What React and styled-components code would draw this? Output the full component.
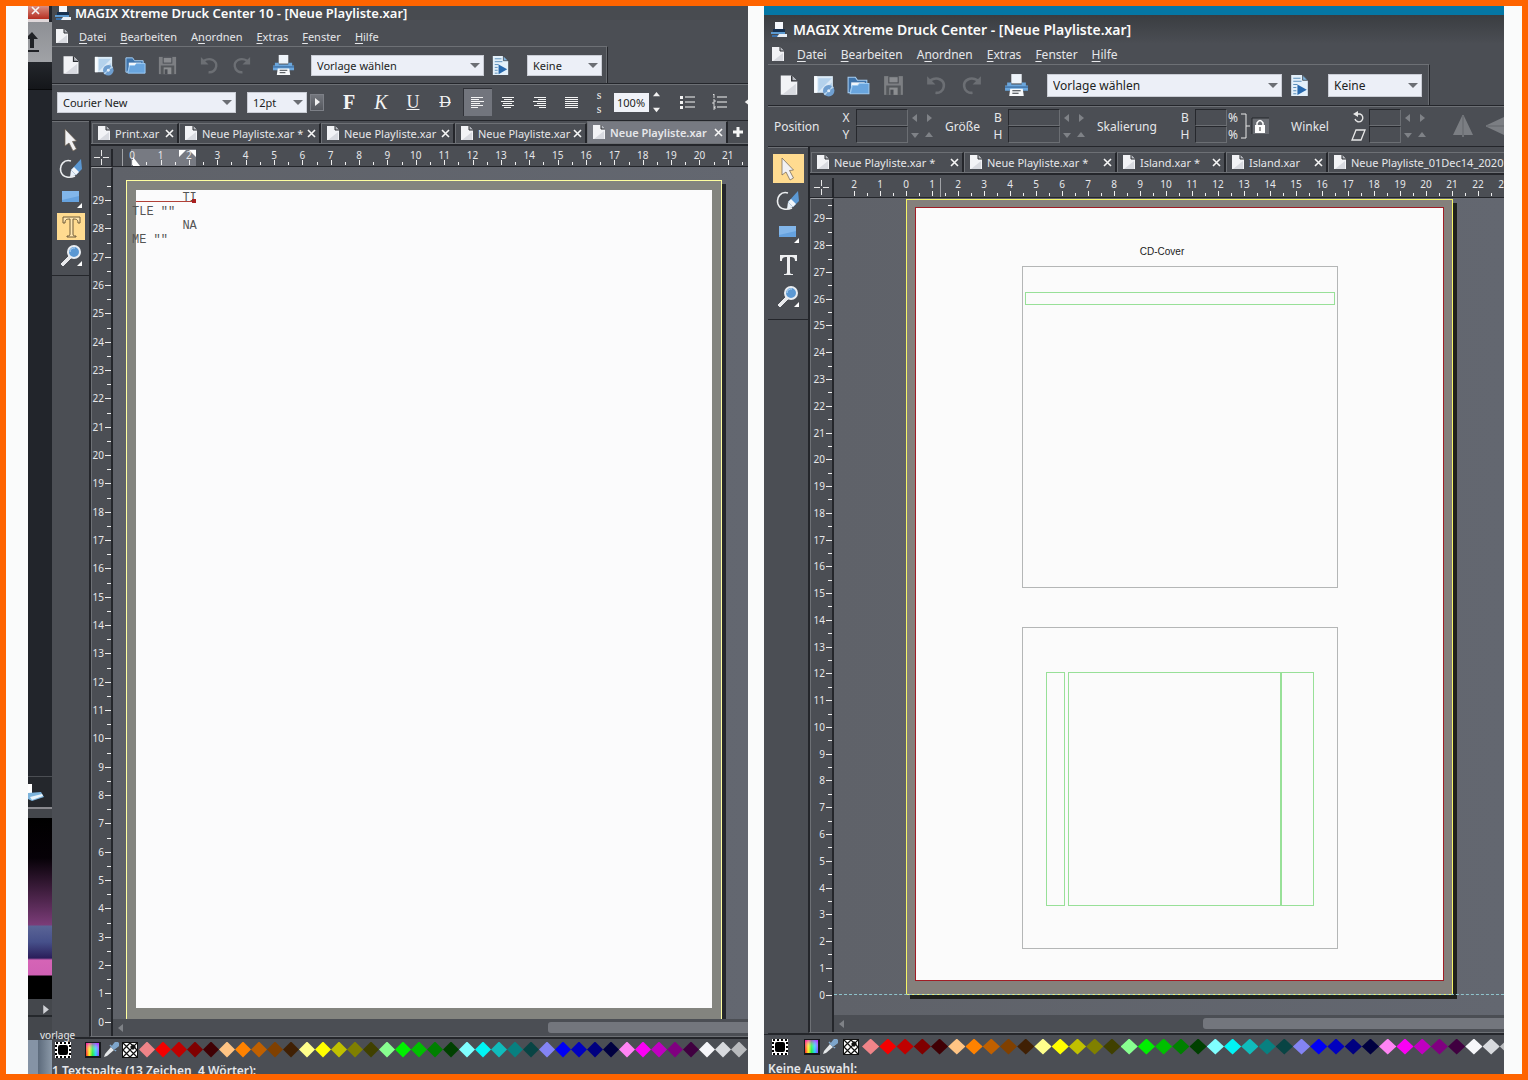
import React from "react";

import styled, { createGlobalStyle, css } from "styled-components";

const GlobalStyle = createGlobalStyle`
  * {
    box-sizing: border-box;
  }

  body {
    margin: 0;
    background: #fafafa;
    font-family: "Noto Sans", "Open Sans", sans-serif;
    font-size: 11px;
    color: #e6e7ea;
  }

  button,
  input,
  select {
    margin: 0;
    padding: 0;
    border: 0;
    border-radius: 0;
    background: none;
    font: inherit;
    color: inherit;
  }

  svg {
    display: block;
    flex: none;
  }
`;

const Frame = styled.div`
  display: grid;
  grid-template-columns: minmax(0, 24fr) minmax(0, 696fr) 16px minmax(0, 740fr);
  min-height: 100vh;
  padding: 0 18px 0 22px;
  border: 6px solid #fe6400;
  background: #fafbfb;
  overflow: hidden;
`;

/* ---------- strip of the program behind the left window ---------- */

const Strip = styled.aside`
  position: relative;
  z-index: 1;
  display: flex;
  flex-direction: column;
  background: #22252b;
`;

const StripClose = styled.button`
  display: flex;
  justify-content: center;
  width: 21px;
  height: 16px;
  padding-right: 6px;
  border-bottom: 3px solid #e0d8da;
  background: linear-gradient(#d98d80, #b52e20);
`;

const StripUp = styled.button`
  display: flex;
  align-items: center;
  height: 40px;
  background: linear-gradient(#8e9095, #a0a2a6);
`;

const StripShade = styled.div`
  height: 28px;
  border-bottom: 1px solid #08090b;
  background: linear-gradient(#24272c, #14161a);
`;

const StripFill = styled.div`
  flex: 1;
`;

const StripPrinter = styled.div`
  height: 33px;
  padding-top: 7px;
  border-top: 1px solid #4b4e53;
  border-bottom: 2px solid #8a8a8f;
  background: #24272c;
`;

const StripArt = styled.div`
  height: 190px;
  border-top: 9px solid #43464b;
  background: linear-gradient(
    #000 0,
    #060107 40px,
    #7b3c78 107px,
    #5a6496 108px,
    #46508a 124px,
    #2a1e5a 140px,
    #d564b6 142px,
    #d060b4 157px,
    #000 158px
  );
`;

const StripPlay = styled.div`
  display: flex;
  align-items: center;
  justify-content: flex-end;
  height: 18px;
  padding-top: 4px;
  padding-right: 2px;
  border-bottom: 2px solid #25282c;
  background: #44474c;
`;

const StripCaption = styled.div`
  height: 23px;
  padding: 10px 0 0 12px;
  line-height: 16px;
  font-size: 10px;
  white-space: nowrap;
  background: #44474c;
`;

const StripGlass = styled.div`
  height: 34px;
  border-left: 10px solid #8593a5;
  background: linear-gradient(90deg, #5c6a7b, #8b99a8);
`;

/* ---------- window chrome ---------- */

const Window = styled.section`
  display: flex;
  flex-direction: column;
  min-width: 0;
  overflow: hidden;
  background: #4b4e54;

  ${(props) =>
    props.$wide &&
    css`
      grid-column: 4;
      border-top: 9px solid #0577a5;
      font-size: 12px;
    `}
`;

const Title = styled.header`
  display: flex;
  align-items: center;
  gap: ${(props) => (props.$wide ? 6 : 4)}px;
  flex: none;
  height: ${(props) => (props.$wide ? 29 : 14)}px;
  margin-bottom: ${(props) => (props.$wide ? 0 : 6)}px;
  padding-left: ${(props) => (props.$wide ? 7 : 3)}px;
  background: ${(props) =>
    props.$wide ? "linear-gradient(#3a3d41, #4b4e54)" : "#484b50"};

  h1 {
    margin: 0;
    font-size: ${(props) => (props.$wide ? 14 : 13)}px;
    line-height: 14px;
    font-weight: 600;
    white-space: nowrap;
    color: #fbfbfb;
  }
`;

const Menu = styled.nav`
  display: flex;
  align-items: center;
  flex: none;
  gap: 14px;
  height: 20px;
  padding-left: ${(props) => (props.$wide ? 7 : 3)}px;

  button:first-of-type {
    margin-left: ${(props) => (props.$wide ? -2 : -4)}px;
  }

  u {
    text-underline-offset: 2px;
  }
`;

const Toolbar = styled.div`
  display: flex;
  align-items: center;
  flex: none;
  width: ${(props) => (props.$wide ? 662 : 556)}px;
  height: ${(props) => (props.$wide ? 41 : 37)}px;
  margin-left: ${(props) => (props.$wide ? 4 : 0)}px;
  padding-left: 3px;
  border-top: 1px solid #6d7075;
  border-right: 1px solid #24262b;
  box-shadow: inset -1px 0 #686b70;
`;

const OptionBar = styled.div`
  display: flex;
  align-items: center;
  flex: none;
  height: ${(props) => (props.$wide ? 41 : 37)}px;
  margin-left: ${(props) => (props.$wide ? 4 : 0)}px;
  border-top: 1px solid #24262b;
  box-shadow: inset 0 1px #6d7075;
  white-space: nowrap;
  overflow: hidden;
`;

const ToolButton = styled.button`
  display: flex;
  align-items: center;
  justify-content: center;
  flex: none;
  width: ${(props) => props.$w || 32}px;
  height: 28px;
  margin-left: ${(props) => props.$gap || 0}px;
  background: ${(props) => (props.$active ? "#72757d" : "none")};
  box-shadow: ${(props) => (props.$active ? "inset 1px 1px #303238" : "none")};
`;

const Letter = styled.span`
  font-family: "Liberation Serif", serif;
  font-size: ${(props) => props.$size || 20}px;
  line-height: 24px;
  color: #f4f4f4;
  font-weight: ${(props) => (props.$bold ? 700 : 400)};
  font-style: ${(props) => (props.$italic ? "italic" : "normal")};
  text-decoration: ${(props) => props.$line || "none"};
  text-decoration-thickness: 1px;
`;

const SelectBox = styled.label`
  position: relative;
  flex: none;
  width: ${(props) => props.$w}px;
  height: ${(props) => props.$h || 21}px;
  margin-left: ${(props) => props.$gap || 0}px;

  select {
    display: block;
    width: 100%;
    height: 100%;
    padding: 0 18px 0 5px;
    border: 1px solid #c9ccd4;
    background: #eceff7;
    color: #1c1e22;
    appearance: none;
  }

  svg {
    position: absolute;
    right: 4px;
    top: 50%;
    margin-top: -2px;
    pointer-events: none;
  }
`;

const MoreButton = styled.button`
  display: flex;
  align-items: center;
  justify-content: center;
  flex: none;
  width: 14px;
  height: 17px;
  margin-left: 3px;
  border: 1px solid #7d8087;
  background: linear-gradient(#73767d, #55585e);
`;

const Scripts = styled.button`
  flex: none;
  width: 22px;
  font-family: "Liberation Serif", serif;
  font-size: 12px;
  line-height: 14px;
  color: #f4f4f4;

  span {
    display: block;
  }
`;

const PercentInput = styled.input`
  flex: none;
  width: 35px;
  height: 19px;
  margin-left: 4px;
  padding-left: 3px;
  background: #f0f2f8;
  color: #1c1e22;
`;

const Spinner = styled.span`
  display: flex;
  flex-direction: column;
  flex: none;
  gap: 8px;
  margin: 0 12px 0 4px;

  button {
    display: block;
  }
`;

/* ---------- position / size fields ---------- */

const GroupName = styled.span`
  flex: none;
  width: ${(props) => props.$w}px;
  margin-left: ${(props) => props.$gap}px;
`;

const Fields = styled.div`
  display: grid;
  flex: none;

  label {
    display: flex;
    align-items: center;
    height: 17px;
  }

  label > span,
  label > svg {
    width: 16px;
    text-align: center;
  }

  input {
    width: ${(props) => props.$w}px;
    height: 17px;
    margin-left: 2px;
    border: 1px solid;
    border-color: #26282d #6b6e73 #6b6e73 #26282d;
  }
`;

const Percents = styled.div`
  display: grid;
  flex: none;
  width: 12px;
  line-height: 17px;
  text-align: center;
`;

const Nudges = styled.div`
  display: grid;
  grid-template-columns: 8px 8px;
  gap: 9px 6px;
  flex: none;
  margin-left: 3px;

  button {
    display: flex;
    justify-content: center;
  }
`;

/* ---------- body ---------- */

const Body = styled.div`
  display: flex;
  flex: 1;
  min-height: 0;
  margin-left: ${(props) => (props.$wide ? 4 : 0)}px;
  border-top: 1px solid #24262b;
  border-bottom: 1px solid #24262b;
`;

const Toolbox = styled.div`
  display: flex;
  flex-direction: column;
  align-items: center;
  gap: ${(props) => (props.$wide ? 3 : 2)}px;
  flex: none;
  width: ${(props) => (props.$wide ? 40 : 37)}px;
  height: ${(props) => (props.$wide ? 173 : 155)}px;
  padding-top: ${(props) => (props.$wide ? 7 : 5)}px;
  border-bottom: 1px solid #24262b;
  box-shadow: inset 0 1px #6d7075;
`;

const Tool = styled.button`
  display: flex;
  align-items: center;
  justify-content: center;
  width: ${(props) => (props.$wide ? 31 : 28)}px;
  height: ${(props) => (props.$wide ? 29 : 27)}px;
  background: ${(props) => (props.$active ? "#ffdb90" : "none")};
`;

const Desk = styled.div`
  display: flex;
  flex-direction: column;
  flex: 1;
  min-width: 0;
  border-left: 2px solid #24262b;
  border-bottom: 1px solid #6d7075;
`;

const Tabs = styled.div`
  display: flex;
  align-items: flex-end;
  flex: none;
  height: ${(props) => (props.$wide ? 26 : 23)}px;
  padding-left: 1px;
  border-bottom: 1px solid #6d7075;
  overflow: hidden;
`;

const Tab = styled.div`
  display: flex;
  align-items: center;
  flex: none;
  width: ${(props) => props.$w}px;
  height: ${(props) => (props.$active ? 22 : 20)}px;
  padding: 0 3px 1px 4px;
  border-left: 1px solid #6d7075;
  border-top: 1px solid #6d7075;
  border-right: 2px solid #24262b;
  font-size: 11px;
  font-weight: ${(props) => (props.$active ? 600 : 400)};
  background: ${(props) => (props.$active ? "#777a82" : "none")};
  white-space: nowrap;

  a {
    flex: 1;
    margin-left: 4px;
    color: inherit;
    text-decoration: none;
  }
`;

const NewTab = styled.button`
  align-self: center;
  margin-left: 4px;
`;

const RulerRow = styled.div`
  display: flex;
  flex: none;
  height: ${(props) => (props.$wide ? 25 : 23)}px;
  padding-top: 3px;
  border-top: 2px solid #24262b;
`;

const Corner = styled.div`
  display: flex;
  align-items: center;
  justify-content: center;
  flex: none;
  width: ${(props) => (props.$wide ? 24 : 22)}px;
  border-right: 2px solid #24262b;
  border-bottom: 1px solid #24262b;
`;

const HRuler = styled.ol`
  display: grid;
  grid-template-columns: repeat(${(props) => props.$count}, 1fr);
  flex: none;
  width: ${(props) => props.$length}px;
  margin: 0 0 0 ${(props) => props.$start}px;
  padding: 0;
  list-style: none;
  font-size: 10px;

  li {
    position: relative;
    line-height: 12px;
    text-align: center;
  }

  li::before,
  li::after {
    content: "";
    position: absolute;
    bottom: 1px;
    width: 1px;
    background: #f0f0f0;
  }

  li::before {
    left: 50%;
    height: 5px;
  }

  li::after {
    left: 100%;
    height: 3px;
  }
`;

const HRulerTrack = styled.div`
  position: relative;
  display: flex;
  flex: 1;
  min-width: 0;
  overflow: hidden;
  border-bottom: 1px solid #24262b;
`;

const Indent = styled.div`
  position: absolute;
  left: 18px;
  top: 0;
  bottom: 0;
  width: 65px;
  background: #777a82;
`;

const RulerMarks = styled.svg`
  position: absolute;
  left: 18px;
  top: 0;
`;

const Cursor = styled.div`
  position: absolute;
  left: ${(props) => props.$x}px;
  top: 0;
  bottom: 0;
  border-left: 1px solid #a0a2a6;
`;

const DeskMain = styled.div`
  display: flex;
  flex: 1;
  min-height: 0;
`;

const VRulerTrack = styled.div`
  flex: none;
  width: ${(props) => (props.$wide ? 24 : 22)}px;
  padding-top: ${(props) => (props.$wide ? 6 : 18)}px;
  border-top: 1px solid #a0a2a6;
  border-left: 1px solid #6d7075;
  border-right: 2px solid #24262b;
  overflow: hidden;
`;

const VRuler = styled.ol`
  display: grid;
  grid-template-rows: repeat(30, 1fr);
  height: ${(props) => props.$length}px;
  margin: 0;
  padding: 0;
  list-style: none;
  font-size: 10px;

  li {
    position: relative;
    display: flex;
    align-items: center;
    justify-content: flex-end;
    padding-right: 7px;
  }

  li::before,
  li::after {
    content: "";
    position: absolute;
    right: 0;
    height: 1px;
    background: #f0f0f0;
  }

  li::before {
    top: 50%;
    width: 6px;
  }

  li::after {
    top: 0;
    width: 4px;
  }
`;

const CanvasColumn = styled.div`
  display: flex;
  flex-direction: column;
  flex: 1;
  min-width: 0;
`;

const Viewport = styled.div`
  position: relative;
  display: flex;
  flex: 1;
  padding: ${(props) => (props.$wide ? "1px 0 20px 72px" : "13px 0 0 13px")};
  overflow: hidden;
  background: linear-gradient(90deg, #5f6269, #636770);
`;

const Baseline = styled.div`
  position: absolute;
  left: 0;
  right: 0;
  bottom: 20px;
  border-bottom: 1px dashed #8fc4cc;
`;

const Scrollbar = styled.div`
  display: flex;
  align-items: center;
  justify-content: space-between;
  flex: none;
  height: 17px;
  padding-left: 4px;
  background: #4b4e54;
`;

const Thumb = styled.div`
  width: ${(props) => props.$w}px;
  height: 11px;
  border-radius: 3px 0 0 3px;
  background: #73767d;
`;

/* ---------- pages ---------- */

const TextPage = styled.article`
  width: 596px;
  flex: none;
  border: 1px solid #ffffa0;
  border-bottom: 0;
  box-shadow: 4px 4px #24262b;
  background: #83847f;
  padding: 9px 9px 11px;
`;

const TextSheet = styled.div`
  position: relative;
  height: 100%;
  background: #fbfbfc;

  pre {
    margin: 0 0 0 -4px;
    padding-top: 1px;
    font-family: "Liberation Mono", monospace;
    font-size: 12px;
    line-height: 14px;
    color: #555;
  }
`;

const TextLine = styled.div`
  position: absolute;
  left: 0;
  top: 11px;
  width: 59px;
  border-top: 1px solid #b04038;

  &::after {
    content: "";
    position: absolute;
    right: -1px;
    top: -3px;
    width: 4px;
    height: 4px;
    background: #a82020;
  }
`;

const CoverPage = styled.article`
  width: 547px;
  flex: none;
  padding: 7px 8px 13px;
  border: 1px solid #f4f466;
  box-shadow: 4px 4px #1e201c;
  background: #84807c;
`;

const CoverSheet = styled.div`
  display: flex;
  flex-direction: column;
  align-items: center;
  height: 100%;
  padding: 35px 0 0 1px;
  border: 1px solid #a01c24;
  background: #fbfbfb;

  h2 {
    margin: 0 36px 5px 0;
    font-family: "Liberation Sans", Arial, sans-serif;
    font-size: 10px;
    line-height: 18px;
    font-weight: 400;
    color: #222;
  }
`;

const CoverBox = styled.div`
  display: flex;
  width: 316px;
  height: 322px;
  margin-bottom: ${(props) => (props.$back ? 0 : 39)}px;
  border: 1px solid #b4b6b6;
  padding: ${(props) => (props.$back ? "44px 23px 42px" : "25px 2px")};
`;

const Guide = styled.div`
  flex: ${(props) => props.$grow || "none"};
  width: ${(props) => props.$w || 0}px;
  height: ${(props) => (props.$h ? props.$h + "px" : "auto")};
  margin-right: ${(props) => props.$gap || 0}px;
  border: 1px solid #98e098;
`;

/* ---------- footer ---------- */

const ColorBar = styled.div`
  display: flex;
  align-items: center;
  flex: none;
  height: ${(props) => (props.$wide ? 24 : 22)}px;
  padding-left: ${(props) => (props.$wide ? 7 : 2)}px;
  border-top: 1px solid #24262b;
  overflow: hidden;
`;

const Swatches = styled.div`
  display: grid;
  grid-template-columns: repeat(38, 1fr);
  flex: none;
  width: ${(props) => props.$length}px;
`;

const Swatch = styled.button`
  height: 16px;
  background: ${(props) => props.$color};
  clip-path: polygon(50% 0, 100% 50%, 50% 100%, 0 50%);
`;

const Status = styled.footer`
  flex: none;
  height: ${(props) => (props.$wide ? 16 : 14)}px;
  padding-left: ${(props) => (props.$wide ? 4 : 0)}px;
  font-size: 12px;
  line-height: 22px;
  font-weight: 600;
  overflow: hidden;
`;

/* ---------- icons ---------- */

const Page = ({ size = 14 }) => (
  <svg width={size} height={size + 2} viewBox="0 0 14 16">
    <path d="M1 1h8l4 4v10H1z" fill="#f2f3f6" />
    <path d="M9 1v4h4" fill="#b4b7be" stroke="#2b2d31" strokeWidth="1" />
    <path d="M2 15L12 7v8z" fill="#d8dae0" />
  </svg>
);

const Logo = () => (
  <svg width="16" height="16" viewBox="0 0 16 16">
    <path d="M4 0h8v7H4z" fill="#f5f8fc" />
    <path d="M2 7h12v3H2z" fill="#16304f" />
    <path d="M0 10h14v2H0z" fill="#5d9ad0" />
    <path d="M1 13h6v2H1z" fill="#3a6fa8" />
    <path d="M8 12h8v3H6z" fill="#e8eef5" />
  </svg>
);

const Album = ({ size }) => (
  <svg width={size} height={size} viewBox="0 0 24 24">
    <path d="M3 3h18v16H3z" fill="#dcebf7" />
    <path d="M3 3h3v16H3z" fill="#f8fbfe" />
    <path d="M7 5h13v13H7z" fill="#b4d2ec" />
    <path d="M7 18L20 5v4L11 18z" fill="#fff" opacity=".5" />
    <circle cx="17" cy="17" r="5.500" fill="#6f9fd0" />
    <path d="M17 17l5-3-1.500-2zM17 17l-5 3 1.500 1.500z" fill="#b9d6ef" />
    <circle cx="17" cy="17" r="1.500" fill="#e4f0fa" />
  </svg>
);

const Folder = ({ size }) => (
  <svg width={size} height={size} viewBox="0 0 24 24">
    <path d="M2 4h7l2 3h9v4H6L4 19H2z" fill="#3f74ab" stroke="#a8d0f4" />
    <path d="M5 9h13v4H5z" fill="#f1f6fb" />
    <path d="M4 20l2-8h5l2-2h9v10z" fill="#69a5de" stroke="#9ccaf2" />
  </svg>
);

const Disk = ({ size }) => (
  <svg width={size} height={size} viewBox="0 0 24 24">
    <path d="M3 3h18v18H3z" fill="#7d7f83" />
    <path d="M7 3h10v7H7z" fill="#4b4e54" />
    <path d="M8 4h8v5H8z" fill="#898b8f" />
    <path d="M5 12h14v9H5z" fill="#55585c" />
    <path d="M8 14h8v7H8z" fill="#8c8e91" />
    <path d="M9 16h3v5H9z" fill="#4b4e54" />
  </svg>
);

const Turn = ({ size, flip }) => (
  <svg width={size} height={size} viewBox="0 0 24 24">
    <g transform={flip ? "matrix(-1 0 0 1 24 0)" : undefined}>
      <path d="M6 7c7-4 14 0 13 6-.5 4-4 6.500-8 6" fill="none" stroke="#6c6f74" strokeWidth="2.500" />
      <path d="M3 3v8h8z" fill="#6c6f74" />
    </g>
  </svg>
);

const Printer = ({ size }) => (
  <svg width={size} height={size} viewBox="0 0 24 24">
    <path d="M7 1h10v9H7z" fill="#eef4fa" />
    <path d="M3 9h4v2h10V9h4v3h2v5H1v-5h2z" fill="#6ba6dc" />
    <path d="M1 13h22v1H1z" fill="#2d5d92" />
    <path d="M6 15h12l1 7H5z" fill="#f7f9fb" />
    <path d="M8 17h8M8 19.500h6" stroke="#33383f" />
  </svg>
);

const PlayPage = ({ size }) => (
  <svg width={size} height={size} viewBox="0 0 24 24">
    <path d="M4 2h11l5 5v15H4z" fill="#e3f0fa" />
    <path d="M15 2v5h5z" fill="#7fb2dc" stroke="#2b2d31" strokeWidth=".7" />
    <path d="M6 5h7M6 8h8M6 11h4M6 14h3M6 17h3M6 20h3" stroke="#5c8fba" />
    <path d="M10 11l9 5-9 5z" fill="#2769ae" />
  </svg>
);

const Caret = ({ w = 10, color = "#6b6e74" }) => (
  <svg width={w} height={w / 2} viewBox="0 0 10 5">
    <path d="M0 0h10L5 5z" fill={color} />
  </svg>
);

const sidePaths = {
  right: "M2 0l5 4-5 4z",
  left: "M6 0L1 4l5 4z",
  up: "M0 6l4-5 4 5z",
  down: "M0 2l4 5 4-5z",
};

const Side = ({ dir = "right", color = "#f2f2f2", size = 8 }) => (
  <svg width={size} height={size} viewBox="0 0 8 8">
    <path d={sidePaths[dir]} fill={color} />
  </svg>
);

const Align = ({ kind }) => {
  const widths = [12, 8, 13, 9, 12, 7];
  return (
    <svg width="14" height="13" viewBox="0 0 14 13" shapeRendering="crispEdges">
      {widths.map((len, i) => {
        const w = kind === "block" ? 13 : len;
        const x = kind === "right" ? 13 - w : kind === "center" ? (13 - w) / 2 : 0;
        return <rect key={i} x={x} y={1 + i * 2} width={w} height="1" fill="#f4f4f4" />;
      })}
    </svg>
  );
};

const List = ({ numbered }) => (
  <svg width="16" height="16" viewBox="0 0 16 16">
    <path d="M5 3h10M5 8h10M5 13h10" stroke="#f4f4f4" strokeWidth="1.200" />
    {numbered ? (
      <path d="M1 1l1-1v4M1 6h2v2H1v2h2M1 12h2v1.500H1.500M3 13.500V15H1" fill="none" stroke="#f4f4f4" strokeWidth=".8" />
    ) : (
      <path d="M0 2h3v3H0zM0 7h3v3H0zM0 12h3v3H0z" fill="#f4f4f4" />
    )}
  </svg>
);

const Close = () => (
  <svg width="9" height="9" viewBox="0 0 9 9">
    <path d="M1 1l7 7M8 1L1 8" stroke="#f6f6f6" strokeWidth="1.600" />
  </svg>
);

const Arrow = () => (
  <svg width="24" height="24" viewBox="0 0 24 24">
    <path d="M6 1v17l4-3 4 8 3.500-2-4-7.500 4-.5z" fill="#f1f1f3" stroke="#6b5f50" strokeWidth=".7" />
  </svg>
);

const Brush = () => (
  <svg width="24" height="24" viewBox="0 0 24 24">
    <path d="M12 4C5 2 0 8 2 15c2 6 9 6 14 4" fill="none" stroke="#eceef0" strokeWidth="1.600" />
    <path d="M12 13l5 5-6 2z" fill="#e8f0f8" />
    <path d="M12 13L22 2l1 10-6 6z" fill="#5b98d3" />
    <path d="M12 13l3-3 5 5-3 3z" fill="#f1f5f9" />
  </svg>
);

const Rectangle = () => (
  <svg width="24" height="24" viewBox="0 0 24 24">
    <path d="M3 5h17v11H3z" fill="#66a2df" />
    <path d="M3 5h17v5L3 14z" fill="#82b6ea" />
    <path d="M23 17v5h-5z" fill="#fff" />
  </svg>
);

const TextTool = ({ hollow }) => (
  <svg width="24" height="26" viewBox="0 0 24 26">
    <path
      d="M4 3h17v6h-2c0-3-1-4-5-4v15c0 2 1 2 3 2v1H8v-1c2 0 3 0 3-2V5C7 5 6 6 6 9H4z"
      fill={hollow ? "#ffe6b0" : "#eeeff1"}
      stroke={hollow ? "#6f5b38" : "none"}
    />
  </svg>
);

const Magnifier = () => (
  <svg width="24" height="24" viewBox="0 0 24 24">
    <path d="M2 20l8-8 2 2-8 8z" fill="#e8e9ec" stroke="#e8e9ec" />
    <circle cx="15" cy="8" r="6" fill="#5b98d3" stroke="#e9edf2" strokeWidth="2" />
    <path d="M11 8a4 4 0 0 1 5-4" stroke="#bddcf5" fill="none" />
    <path d="M23 17v5h-5z" fill="#fff" />
  </svg>
);

const NoFill = () => (
  <svg width="16" height="16" viewBox="0 0 16 16">
    <rect x="1" y="1" width="14" height="14" fill="none" stroke="#fff" strokeWidth="2" />
    <rect x="1" y="1" width="14" height="14" fill="none" stroke="#000" strokeWidth="2" strokeDasharray="2 2" />
    <rect x="2" y="2" width="12" height="12" fill="#fff" />
    <rect x="3" y="3" width="10" height="10" rx="2" fill="#000" />
  </svg>
);

const Spectrum = ({ id }) => (
  <svg width="16" height="16" viewBox="0 0 16 16">
    <defs>
      <linearGradient id={`hue-${id}`}>
        <stop offset="0" stopColor="#f22" />
        <stop offset=".25" stopColor="#fe2" />
        <stop offset=".5" stopColor="#2e4" />
        <stop offset=".75" stopColor="#2cf" />
        <stop offset="1" stopColor="#84f" />
      </linearGradient>
      <linearGradient id={`fade-${id}`} x2="0" y2="1">
        <stop offset="0" stopColor="#e0f" stopOpacity=".6" />
        <stop offset=".5" stopColor="#fff" stopOpacity=".2" />
        <stop offset="1" stopColor="#fff" stopOpacity="0" />
      </linearGradient>
    </defs>
    <path d="M0 0h16v16H0z" fill="#16181b" />
    <path d="M1 1h13v13H1z" fill={`url(#hue-${id})`} />
    <path d="M1 1h13v13H1z" fill={`url(#fade-${id})`} />
  </svg>
);

const Dropper = () => (
  <svg width="16" height="16" viewBox="0 0 16 16">
    <path d="M1 15l1-3 6-7 3 3-7 6z" fill="#e6e8ea" />
    <path d="M7 3l6 6M9 5l3-4c2-2 5 1 3 3l-4 3z" stroke="#7fa6cc" strokeWidth="1.500" fill="#7fa6cc" />
  </svg>
);

const Hatch = () => (
  <svg width="16" height="16" viewBox="0 0 16 16">
    <path d="M0 0h16v16H0z" fill="#101010" />
    <path d="M1 1h14v14H1z" fill="#fff" />
    <path d="M1 8l7-7M1 15L15 1M8 15l7-7M1 8l7 7M1 1l14 14M8 1l7 7" stroke="#111" strokeWidth="1.200" />
    <path d="M11 2l3 3-3 3-3-3z" fill="#111" />
  </svg>
);

const Lock = () => (
  <svg width="36" height="26" viewBox="0 0 36 26">
    <path d="M2 1h5v24H2M7 13h4" fill="none" stroke="#e8e8e8" />
    <path d="M13 5h17v16H13z" fill="#6b6e74" />
    <path d="M13 21V5h17" fill="none" stroke="#24262b" />
    <path d="M18 13v-3q3-5 6 0v3" fill="none" stroke="#fff" strokeWidth="1.500" />
    <path d="M16 12h10v8H16z" fill="#fff" />
    <path d="M20.500 14h1v4h-1z" fill="#333" />
  </svg>
);

const RotateMark = () => (
  <svg width="16" height="14" viewBox="0 0 16 14">
    <path d="M4 3h5a4 4 0 1 1-5 5" fill="none" stroke="#e8e8e8" strokeWidth="1.400" />
    <path d="M7 0v6L2 3z" fill="#e8e8e8" />
  </svg>
);

const SkewMark = () => (
  <svg width="16" height="12" viewBox="0 0 16 12">
    <path d="M5 1h9l-4 10H1z" fill="none" stroke="#e8e8e8" strokeWidth="1.300" />
  </svg>
);

const Flip = ({ vertical }) => (
  <svg width="22" height="22" viewBox="0 0 22 22">
    <g transform={vertical ? "rotate(-90 11 11)" : undefined}>
      <path d="M10 1v19H1zM12 1v19h9z" fill="#7b7e83" />
      <path d="M11 0v22" stroke="#94969a" />
    </g>
  </svg>
);

/* ---------- parts ---------- */

const palette = [
  "#f08488", "#f40000", "#c00000", "#800000", "#400004",
  "#ffc484", "#ff8200", "#c06000", "#804000", "#402004",
  "#ffff8c", "#ffff00", "#c0c000", "#808000", "#404000",
  "#88ff90", "#00f000", "#00c000", "#008000", "#004000",
  "#80ffff", "#00f4f4", "#10bcbc", "#088080", "#084444",
  "#8484f4", "#0000f4", "#0000c0", "#000080", "#000040",
  "#ff84f4", "#fa00f4", "#c000c0", "#800080", "#400040",
  "#f6f6fa", "#d8dade", "#b8babd",
];

const range = (from, to) => Array.from({ length: to - from + 1 }, (_, i) => from + i);

function MenuBar({ wide }) {
  return (
    <Menu $wide={wide}>
      <Page size={14} />
      <button><u>D</u>atei</button>
      <button><u>B</u>earbeiten</button>
      <button>A<u>n</u>ordnen</button>
      <button><u>E</u>xtras</button>
      <button><u>F</u>enster</button>
      <button><u>H</u>ilfe</button>
    </Menu>
  );
}

function Picker({ label, value, w, h, gap }) {
  return (
    <SelectBox $w={w} $h={h} $gap={gap}>
      <select aria-label={label} defaultValue={value}>
        <option>{value}</option>
      </select>
      <Caret />
    </SelectBox>
  );
}

function MainTools({ wide }) {
  const w = wide ? 35 : 32;
  const size = wide ? 25 : 23;
  return (
    <Toolbar $wide={wide}>
      <ToolButton $w={w} aria-label="Neu"><Page size={wide ? 20 : 18} /></ToolButton>
      <ToolButton $w={w} aria-label="Vorlagen"><Album size={size} /></ToolButton>
      <ToolButton $w={w} aria-label="Öffnen"><Folder size={size} /></ToolButton>
      <ToolButton $w={w} aria-label="Speichern"><Disk size={size} /></ToolButton>
      <ToolButton $w={w} $gap={wide ? 8 : 10} aria-label="Rückgängig"><Turn size={size} /></ToolButton>
      <ToolButton $w={w} aria-label="Wiederherstellen"><Turn size={size} flip /></ToolButton>
      <ToolButton $w={w} $gap={10} aria-label="Drucken"><Printer size={size} /></ToolButton>
      <Picker label="Vorlage" value="Vorlage wählen" w={wide ? 235 : 173} h={wide ? 23 : 21} gap={wide ? 13 : 12} />
      <ToolButton $w={w} aria-label="Abspielen"><PlayPage size={size} /></ToolButton>
      <Picker label="Effekt" value="Keine" w={wide ? 94 : 75} h={wide ? 23 : 21} gap={11} />
    </Toolbar>
  );
}

function Nudge() {
  return (
    <Nudges>
      {["left", "right", "down", "up"].map((dir) => (
        <button key={dir} aria-label={dir}><Side dir={dir} color="#7f8287" size={8} /></button>
      ))}
    </Nudges>
  );
}

function FieldPair({ first, second, w }) {
  return (
    <Fields $w={w}>
      <label>{first}<input type="text" /></label>
      <label>{second}<input type="text" /></label>
    </Fields>
  );
}

function FileTab({ name, w, active }) {
  return (
    <Tab $w={w} $active={active}>
      <Page size={14} />
      <a href="#tab">{name}</a>
      <button aria-label="Schließen"><Close /></button>
    </Tab>
  );
}

function Tools({ wide, active }) {
  const tools = [
    ["Auswahl", <Arrow />],
    ["Zeichnen", <Brush />],
    ["Rechteck", <Rectangle />],
    ["Text", <TextTool hollow={active === "Text"} />],
    ["Zoom", <Magnifier />],
  ];
  return (
    <Toolbox $wide={wide}>
      {tools.map(([name, icon]) => (
        <Tool key={name} $wide={wide} $active={name === active} aria-label={name}>
          {icon}
        </Tool>
      ))}
    </Toolbox>
  );
}

function Cross() {
  return (
    <svg width="15" height="15" viewBox="0 0 15 15">
      <path d="M7.500 0v6M7.500 9v6M0 7.500h6M9 7.500h6" stroke="#e8e8e8" />
    </svg>
  );
}

function VerticalRuler({ wide }) {
  return (
    <VRulerTrack $wide={wide}>
      <VRuler $length={wide ? 803 : 850}>
        {range(0, 29).reverse().map((n) => <li key={n}>{n}</li>)}
      </VRuler>
    </VRulerTrack>
  );
}

function Footer({ wide, children }) {
  return (
    <>
      <ColorBar $wide={wide}>
        <ToolButton $w={18} aria-label="Linie"><NoFill /></ToolButton>
        <ToolButton $w={18} $gap={wide ? 14 : 12} aria-label="Farben">
          <Spectrum id={wide ? "cover" : "text"} />
        </ToolButton>
        <ToolButton $w={18} aria-label="Pipette"><Dropper /></ToolButton>
        <ToolButton $w={wide ? 23 : 19} aria-label="Keine Farbe"><Hatch /></ToolButton>
        <Swatches $length={wide ? 655 : 608}>
          {palette.map((color) => <Swatch key={color} $color={color} aria-label={color} />)}
        </Swatches>
      </ColorBar>
      <Status $wide={wide}>{children}</Status>
    </>
  );
}

function TextWindow() {
  return (
    <Window>
      <Title>
        <Logo />
        <h1>MAGIX Xtreme Druck Center 10 - [Neue Playliste.xar]</h1>
      </Title>
      <MenuBar />
      <MainTools />
      <OptionBar>
        <Picker label="Schrift" value="Courier New" w={179} gap={5} />
        <Picker label="Größe" value="12pt" w={60} gap={11} />
        <MoreButton aria-label="Mehr"><Side /></MoreButton>
        <ToolButton $gap={9} aria-label="Fett"><Letter $bold>F</Letter></ToolButton>
        <ToolButton aria-label="Kursiv"><Letter $italic>K</Letter></ToolButton>
        <ToolButton aria-label="Unterstrichen"><Letter $size={18} $line="underline">U</Letter></ToolButton>
        <ToolButton aria-label="Durchgestrichen"><Letter $size={16} $line="line-through">D</Letter></ToolButton>
        <ToolButton $w={29} $gap={2} $active aria-label="Links"><Align kind="left" /></ToolButton>
        <ToolButton aria-label="Mitte"><Align kind="center" /></ToolButton>
        <ToolButton aria-label="Rechts"><Align kind="right" /></ToolButton>
        <ToolButton aria-label="Block"><Align kind="block" /></ToolButton>
        <Scripts aria-label="Hoch- und tiefgestellt"><span>s</span><span>s</span></Scripts>
        <PercentInput type="text" aria-label="Prozent" defaultValue="100%" />
        <Spinner>
          <button aria-label="Mehr"><Side dir="up" size={7} /></button>
          <button aria-label="Weniger"><Side dir="down" size={7} /></button>
        </Spinner>
        <ToolButton aria-label="Liste"><List /></ToolButton>
        <ToolButton aria-label="Nummerierung"><List numbered /></ToolButton>
        <ToolButton $w={28} aria-label="Tabulator"><Side dir="left" size={14} /></ToolButton>
      </OptionBar>
      <Body>
        <Tools active="Text" />
        <Desk>
          <Tabs>
            <FileTab name="Print.xar" w={87} />
            <FileTab name="Neue Playliste.xar *" w={142} />
            <FileTab name="Neue Playliste.xar" w={134} />
            <FileTab name="Neue Playliste.xar" w={132} />
            <FileTab name="Neue Playliste.xar" w={141} active />
            <NewTab aria-label="Neuer Tab">
              <svg width="12" height="12" viewBox="0 0 12 12">
                <path d="M6 1v10M1 6h10" stroke="#f6f6f6" strokeWidth="3" />
              </svg>
            </NewTab>
          </Tabs>
          <RulerRow>
            <Corner><Cross /></Corner>
            <HRulerTrack>
              <Indent />
              <Cursor $x={9} />
              <HRuler $count={22} $length={624} $start={5}>
                {range(0, 21).map((n) => <li key={n}>{n}</li>)}
              </HRuler>
              <RulerMarks width="66" height="18" viewBox="0 0 66 18">
                <path d="M2 8v9h7z" fill="#fff" />
                <path d="M48 8V1h7zM65 8V1h-7z" fill="#fff" />
              </RulerMarks>
            </HRulerTrack>
          </RulerRow>
          <DeskMain>
            <VerticalRuler />
            <CanvasColumn>
              <Viewport>
                <TextPage>
                  <TextSheet>
                    <pre>{'       TI\nTLE ""\n       NA\nME ""'}</pre>
                    <TextLine />
                  </TextSheet>
                </TextPage>
              </Viewport>
              <Scrollbar>
                <Side dir="left" color="#7f8287" />
                <Thumb $w={200} />
              </Scrollbar>
            </CanvasColumn>
          </DeskMain>
        </Desk>
      </Body>
      <Footer>1 Textspalte (13 Zeichen, 4 Wörter):</Footer>
    </Window>
  );
}

function CoverWindow() {
  return (
    <Window $wide>
      <Title $wide>
        <Logo />
        <h1>MAGIX Xtreme Druck Center - [Neue Playliste.xar]</h1>
      </Title>
      <MenuBar wide />
      <MainTools wide />
      <OptionBar $wide>
        <GroupName $w={64} $gap={6}>Position</GroupName>
        <FieldPair w={52} first={<span>X</span>} second={<span>Y</span>} />
        <Nudge />
        <GroupName $w={45} $gap={12}>Größe</GroupName>
        <FieldPair w={52} first={<span>B</span>} second={<span>H</span>} />
        <Nudge />
        <GroupName $w={80} $gap={12}>Skalierung</GroupName>
        <FieldPair w={32} first={<span>B</span>} second={<span>H</span>} />
        <Percents>
          <span>%</span>
          <span>%</span>
        </Percents>
        <ToolButton $w={36} aria-label="Seitenverhältnis"><Lock /></ToolButton>
        <GroupName $w={60} $gap={16}>Winkel</GroupName>
        <FieldPair w={32} first={<RotateMark />} second={<SkewMark />} />
        <Nudge />
        <ToolButton $w={34} $gap={20} aria-label="Horizontal spiegeln"><Flip /></ToolButton>
        <ToolButton $w={34} aria-label="Vertikal spiegeln"><Flip vertical /></ToolButton>
      </OptionBar>
      <Body $wide>
        <Tools wide active="Auswahl" />
        <Desk>
          <Tabs $wide>
            <FileTab name="Neue Playliste.xar *" w={153} />
            <FileTab name="Neue Playliste.xar *" w={153} />
            <FileTab name="Island.xar *" w={109} />
            <FileTab name="Island.xar" w={102} />
            <FileTab name="Neue Playliste_01Dec14_2020" w={220} />
          </Tabs>
          <RulerRow $wide>
            <Corner $wide><Cross /></Corner>
            <HRulerTrack>
              <Cursor $x={106} />
              <HRuler $count={26} $length={676} $start={7}>
                {range(-2, 23).map((n) => <li key={n}>{Math.abs(n)}</li>)}
              </HRuler>
            </HRulerTrack>
          </RulerRow>
          <DeskMain>
            <VerticalRuler wide />
            <CanvasColumn>
              <Viewport $wide>
                <CoverPage>
                  <CoverSheet>
                    <h2>CD-Cover</h2>
                    <CoverBox>
                      <Guide $grow={1} $h={13} />
                    </CoverBox>
                    <CoverBox $back>
                      <Guide $w={19} $gap={3} />
                      <Guide $grow={1} />
                      <Guide $w={33} />
                    </CoverBox>
                  </CoverSheet>
                </CoverPage>
                <Baseline />
              </Viewport>
              <Scrollbar>
                <Side dir="left" color="#7f8287" />
                <Thumb $w={301} />
              </Scrollbar>
            </CanvasColumn>
          </DeskMain>
        </Desk>
      </Body>
      <Footer wide>Keine Auswahl:</Footer>
    </Window>
  );
}

export default function App() {
  return (
    <>
      <GlobalStyle />
      <Frame>
        <Strip>
          <StripClose aria-label="Schließen"><Close /></StripClose>
          <StripUp aria-label="Hochladen">
            <svg width="12" height="24" viewBox="0 0 12 24">
              <path d="M4 2l6 7H6v9H2V9H0V6zM0 20h11v2H0z" fill="#202226" />
            </svg>
          </StripUp>
          <StripShade />
          <StripFill />
          <StripPrinter>
            <svg width="16" height="18" viewBox="0 0 16 18">
              <path d="M0 0h4v9H0z" fill="#fff" />
              <path d="M0 9l13-1 3 5-12 4-4-2z" fill="#7db4dc" />
              <path d="M2 13l12-3 1 2-11 4z" fill="#eaf4fa" />
            </svg>
          </StripPrinter>
          <StripArt />
          <StripPlay><Side color="#d0d2d6" size={9} /></StripPlay>
          <StripCaption>vorlage</StripCaption>
          <StripGlass />
        </Strip>
        <TextWindow />
        <CoverWindow />
      </Frame>
    </>
  );
}
